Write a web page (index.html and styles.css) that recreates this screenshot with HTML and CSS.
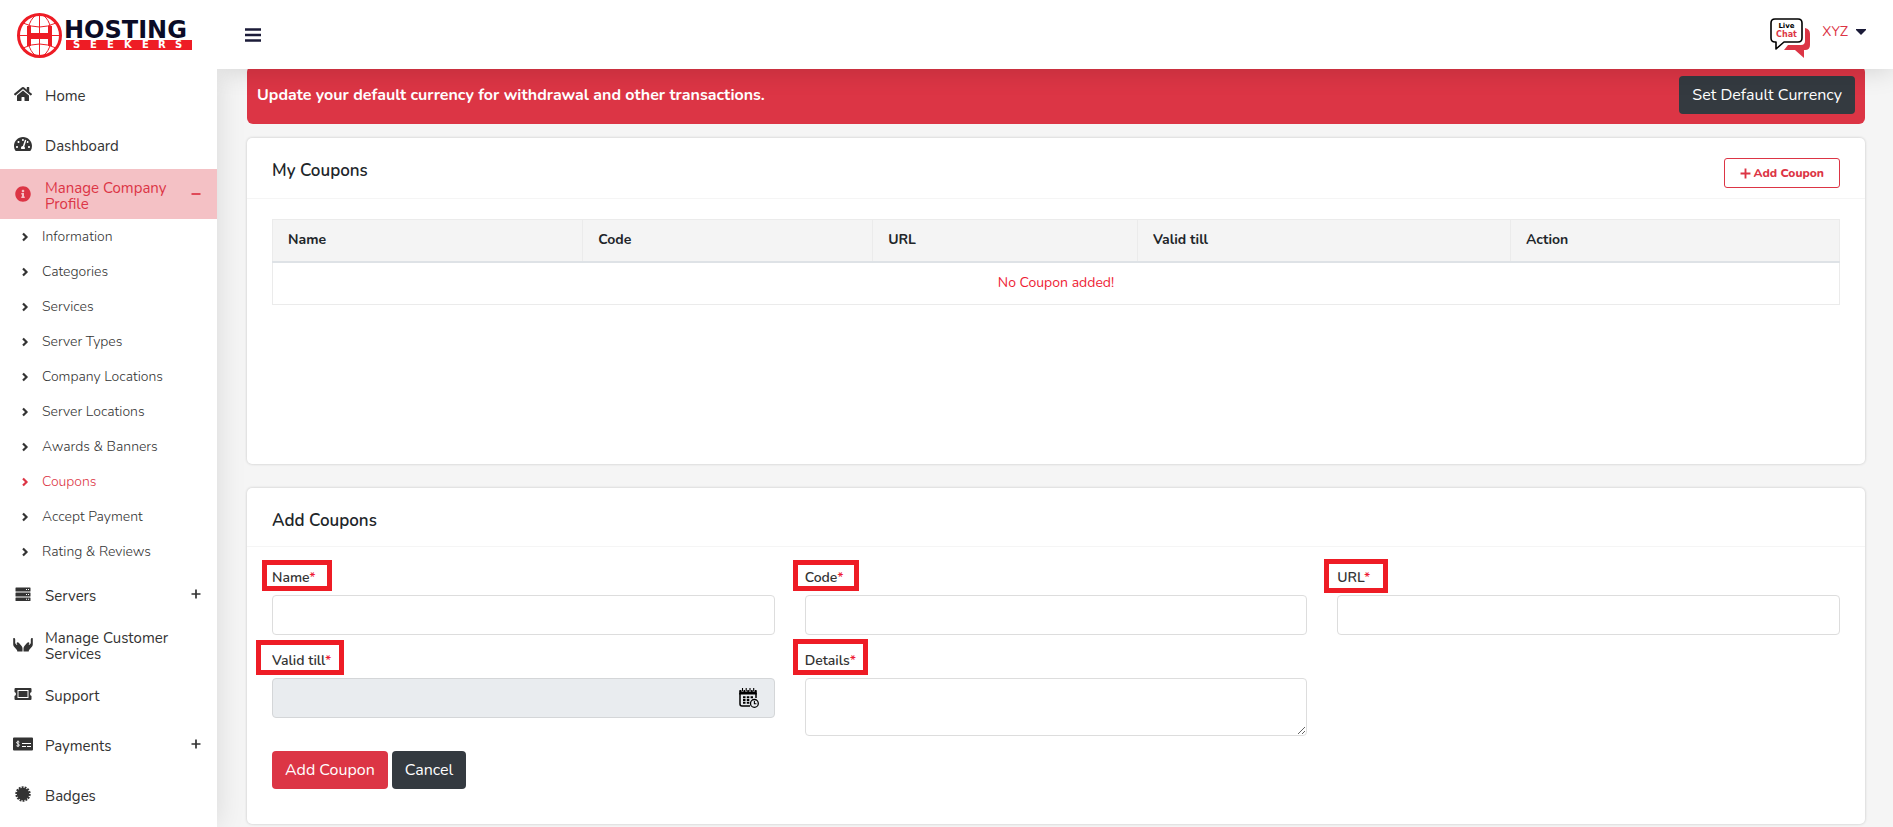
FILE: index.html
```html
<!DOCTYPE html>
<html lang="en">
<head>
<meta charset="utf-8">
<title>Coupons - Hosting Seekers</title>
<meta name="viewport" content="width=device-width, initial-scale=1">
<link rel="stylesheet" href="styles.css">
</head>
<body>
<svg class="defs" aria-hidden="true">
  <symbol id="chevron" viewBox="0 0 8 10"><path d="M2 1.500 5.500 5 2 8.500" fill="none" stroke="currentColor" stroke-width="2.200"/></symbol>
  <symbol id="plus" viewBox="0 0 10 10"><path d="M5 .5v9M.5 5h9" fill="none" stroke="currentColor" stroke-width="1.700"/></symbol>
</svg>
<div class="layout">
  <a class="brand" href="#" aria-label="Hosting Seekers">
    <svg class="logo" width="176" height="46" viewBox="0 0 176 46">
      <g fill="none" stroke="#ee1c25">
        <circle cx="22.500" cy="23.500" r="21" stroke-width="3"/>
        <g stroke-width="1">
          <path d="M22.500 2v43M1 23.500h43M6 11q16.500 8 33 0M6 36q16.500-8 33 0"/>
          <ellipse cx="22.500" cy="23.500" rx="12" ry="21"/>
        </g>
      </g>
      <path fill="#ee1c25" d="M10 14h4v7h17v-7h4v20h-4v-7H14v7h-4z"/>
      <rect x="49" y="28" width="126" height="10" fill="#ee1c25"/>
      <text class="logo-name" x="47" y="26">HOSTING</text>
      <text class="logo-sub" x="56 73 90 107 125 141 158" y="36">SEEKERS</text>
    </svg>
  </a>
  <header class="topbar">
    <button class="menu-toggle" type="button" aria-label="Toggle menu">
      <svg width="16" height="14" viewBox="0 0 16 14"><path d="M0 1.500h16M0 7h16M0 12.500h16" stroke="currentColor" stroke-width="2.400"/></svg>
    </button>
    <div class="account">
      <a class="chat" href="#" aria-label="Live chat">
        <svg width="40" height="41" viewBox="0 0 40 41">
          <path fill="#dc3545" d="M35 10q5 1 5 6v11q0 5-5 5h-1v8l-9-8H14l4-5h13q4 0 4-4z"/>
          <path fill="#fff" stroke="#000" stroke-width="1.600" stroke-linejoin="round" d="M5 1h23q4 0 4 4v15q0 4-4 4H14l-8 7v-7H5q-4 0-4-4V5q0-4 4-4z"/>
          <text class="chat-live" x="16.500" y="10">Live</text>
          <text class="chat-chat" x="16.500" y="18.500">Chat</text>
        </svg>
      </a>
      <button class="user" type="button">XYZ <svg width="10" height="6" viewBox="0 0 10 6"><path d="M0 0h10v1L5 6 0 1z" fill="#1b1b38"/></svg></button>
    </div>
  </header>

  <nav class="sidebar" aria-label="Main">
    <a class="item" href="#">
      <svg class="icon" viewBox="0 0 576 512"><path d="M280.370 148.260L96 300.110V464a16 16 0 0 0 16 16l112.060-.29a16 16 0 0 0 15.920-16V368a16 16 0 0 1 16-16h64a16 16 0 0 1 16 16v95.640a16 16 0 0 0 16 16.050L464 480a16 16 0 0 0 16-16V300L295.670 148.260a12.190 12.190 0 0 0-15.300 0zM571.600 251.470L488 182.560V44.050a12 12 0 0 0-12-12h-56a12 12 0 0 0-12 12v72.610L318.470 43a48 48 0 0 0-61 0L4.340 251.470a12 12 0 0 0-1.600 16.900l25.500 31A12 12 0 0 0 45.150 301l235.220-193.740a12.190 12.190 0 0 1 15.300 0L530.900 301a12 12 0 0 0 16.900-1.600l25.500-31a12 12 0 0 0-1.700-16.930z"/></svg>
      <span class="text">Home</span>
    </a>
    <a class="item" href="#">
      <svg class="icon" viewBox="0 0 576 512"><path d="M288 32C128.940 32 0 160.940 0 320c0 52.800 14.250 102.260 39.060 144.800 5.610 9.620 16.300 15.200 27.440 15.200h443c11.140 0 21.830-5.580 27.440-15.200C561.750 422.260 576 372.800 576 320c0-159.060-128.940-288-288-288zm0 64c14.710 0 26.580 10.130 30.320 23.650-1.110 2.260-2.640 4.230-3.450 6.670l-9.220 27.670c-5.130 3.490-10.970 6.010-17.640 6.010-17.670 0-32-14.330-32-32S270.330 96 288 96zM96 384c-17.670 0-32-14.330-32-32s14.330-32 32-32 32 14.330 32 32-14.330 32-32 32zm48-160c-17.670 0-32-14.330-32-32s14.330-32 32-32 32 14.330 32 32-14.330 32-32 32zm246.770-72.410l-61.330 184C343.130 347.330 352 364.540 352 384c0 11.720-3.380 22.550-8.880 32H232.880c-5.500-9.450-8.880-20.280-8.880-32 0-33.940 26.500-61.430 59.900-63.590l61.340-184.010c4.170-12.560 17.730-19.450 30.360-15.170 12.570 4.190 19.350 17.790 15.170 30.360zm14.660 57.200l15.520-46.550c3.470-1.290 7.130-2.230 11.050-2.230 17.670 0 32 14.330 32 32s-14.330 32-32 32c-11.380-.010-20.890-6.280-26.570-15.220zM480 384c-17.670 0-32-14.330-32-32s14.330-32 32-32 32 14.330 32 32-14.330 32-32 32z"/></svg>
      <span class="text">Dashboard</span>
    </a>
    <a class="item active" href="#">
      <svg class="icon" viewBox="0 0 512 512"><path d="M256 8C119.043 8 8 119.083 8 256c0 136.997 111.043 248 248 248s248-111.003 248-248C504 119.083 392.957 8 256 8zm0 110c23.196 0 42 18.804 42 42s-18.804 42-42 42-42-18.804-42-42 18.804-42 42-42zm56 254c0 6.627-5.373 12-12 12h-88c-6.627 0-12-5.373-12-12v-24c0-6.627 5.373-12 12-12h12v-64h-12c-6.627 0-12-5.373-12-12v-24c0-6.627 5.373-12 12-12h64c6.627 0 12 5.373 12 12v100h12c6.627 0 12 5.373 12 12v24z"/></svg>
      <span class="text">Manage Company Profile</span>
      <svg class="expand" viewBox="0 0 10 10"><path d="M.5 5h9" stroke="currentColor" stroke-width="1.700"/></svg>
    </a>
    <ul class="submenu">
      <li><a class="subitem" href="#"><svg class="chev"><use href="#chevron"/></svg>Information</a></li>
      <li><a class="subitem" href="#"><svg class="chev"><use href="#chevron"/></svg>Categories</a></li>
      <li><a class="subitem" href="#"><svg class="chev"><use href="#chevron"/></svg>Services</a></li>
      <li><a class="subitem" href="#"><svg class="chev"><use href="#chevron"/></svg>Server Types</a></li>
      <li><a class="subitem" href="#"><svg class="chev"><use href="#chevron"/></svg>Company Locations</a></li>
      <li><a class="subitem" href="#"><svg class="chev"><use href="#chevron"/></svg>Server Locations</a></li>
      <li><a class="subitem" href="#"><svg class="chev"><use href="#chevron"/></svg>Awards &amp; Banners</a></li>
      <li><a class="subitem current" href="#"><svg class="chev"><use href="#chevron"/></svg>Coupons</a></li>
      <li><a class="subitem" href="#"><svg class="chev"><use href="#chevron"/></svg>Accept Payment</a></li>
      <li><a class="subitem" href="#"><svg class="chev"><use href="#chevron"/></svg>Rating &amp; Reviews</a></li>
    </ul>
    <a class="item" href="#">
      <svg class="icon" viewBox="0 0 16 16"><path fill-rule="evenodd" d="M1 1.500h14q.5 0 .5.500v3q0 .5-.5.500H1q-.5 0-.5-.5V2q0-.5.500-.5zm10 1.500v1h1V3zm2 0v1h1V3zM1 6.500h14q.5 0 .5.500v3q0 .5-.5.500H1q-.5 0-.5-.5V7q0-.5.500-.5zM11 8v1h1V8zm2 0v1h1V8zM1 11.500h14q.5 0 .5.500v2.500q0 .5-.5.500H1q-.5 0-.5-.5V12q0-.5.500-.5zm10 1.300v1h1v-1zm2 0v1h1v-1z"/></svg>
      <span class="text">Servers</span>
      <svg class="expand"><use href="#plus"/></svg>
    </a>
    <a class="item" href="#">
      <svg class="icon" viewBox="0 0 20 16"><path d="M.2 2.200q2-.5 2 1.300v3.700l1.600 1.900q.6 0 .4-.6L3.600 7.200q.4-1.800 2.200-.5L8.600 10q.9 1 .9 2.500V15.500H4.300q0-1.200-1-2.200L.9 10.500Q.2 9.700.2 8.500zM19.800 2.200q-2-.5-2 1.300v3.700l-1.600 1.900q-.6 0-.4-.6l.6-1.300q-.4-1.800-2.200-.5L11.400 10q-.9 1-.9 2.500V15.500h5.200q0-1.200 1-2.200l2.400-2.800q.7-.8.700-2z"/></svg>
      <span class="text">Manage Customer Services</span>
    </a>
    <a class="item" href="#">
      <svg class="icon" viewBox="0 0 18 16"><path fill-rule="evenodd" d="M1.500 2h15q1 0 1 1v3q-1.500.5-1.500 2t1.500 2v3q0 1-1 1h-15q-1 0-1-1v-3Q2 9.500 2 8T.5 6V3q0-1 1-1zM3.500 4v8h11V4zm1 1h9v6h-9z"/></svg>
      <span class="text">Support</span>
    </a>
    <a class="item" href="#">
      <svg class="icon" viewBox="0 0 20 16"><path fill-rule="evenodd" d="M1 1.500h18q1 0 1 1v11q0 1-1 1H1q-1 0-1-1v-11q0-1 1-1zM9 7v1h9V7zm0 3v1h4v-1zm5 0v1h4v-1z"/><path d="M6.400 6.200Q5 5.200 3.800 6q-.6 1.300 1 1.800 2 .5 1.400 1.900-1 1-2.800 0M5 4.500v6.600" fill="none" stroke="#fff" stroke-width=".9"/></svg>
      <span class="text">Payments</span>
      <svg class="expand"><use href="#plus"/></svg>
    </a>
    <a class="item" href="#">
      <svg class="icon" viewBox="0 0 16 16"><circle cx="8" cy="8" r="6.200"/><circle cx="8" cy="8" r="6.700" fill="none" stroke="currentColor" stroke-width="2" stroke-dasharray="1.900 1.100"/></svg>
      <span class="text">Badges</span>
    </a>
  </nav>

  <main class="content">
    <div class="banner" role="status">
      <strong>Update your default currency for withdrawal and other transactions.</strong>
      <button class="btn btn-dark" type="button">Set Default Currency</button>
    </div>

    <section class="card list-card">
      <div class="card-head">
        <h2>My Coupons</h2>
        <button class="btn-outline" type="button"><svg width="11" height="11"><use href="#plus"/></svg>Add Coupon</button>
      </div>
      <div class="table-wrap">
        <table class="coupons">
          <colgroup><col class="c-name"><col class="c-code"><col class="c-url"><col class="c-valid"><col></colgroup>
          <thead><tr><th>Name</th><th>Code</th><th>URL</th><th>Valid till</th><th>Action</th></tr></thead>
          <tbody><tr><td colspan="5">No Coupon added!</td></tr></tbody>
        </table>
      </div>
    </section>

    <section class="card form-card">
      <div class="card-head"><h2>Add Coupons</h2></div>
      <form class="form">
        <div class="fields">
          <div class="field"><label for="name">Name<span class="req">*</span><i class="mark mark-name"></i></label><input id="name" type="text"></div>
          <div class="field"><label for="code">Code<span class="req">*</span><i class="mark mark-code"></i></label><input id="code" type="text"></div>
          <div class="field"><label for="url">URL<span class="req">*</span><i class="mark mark-url"></i></label><input id="url" type="text"></div>
          <div class="field"><label for="valid">Valid till<span class="req">*</span><i class="mark mark-valid"></i></label>
            <div class="date">
              <input id="valid" type="text" readonly>
              <svg class="cal" width="20" height="20" viewBox="0 0 20 20"><path d="M1 5v11q0 2 2 2h8M17 5v5" fill="none" stroke="#000" stroke-width="1.500"/><path d="M1 2h16q.8 0 .8 1v3.500H.2V3Q.2 2 1 2z"/><path d="M3.500 0v3.500M7.200 0v3.500M11 0v3.500M14.700 0v3.500" stroke="#e9ecef" stroke-width="2.200"/><path d="M3.500 0v3M7.200 0v3M11 0v3M14.700 0v3" stroke="#000" stroke-width="1.100"/><path d="M4 9.200h10M4 12h7M4 14.800h7" stroke="#000" stroke-width="1.900" stroke-dasharray="2.500 1.300"/><circle cx="15.400" cy="15.400" r="3.900" fill="#e9ecef" stroke="#000" stroke-width="1.300"/><path d="M15.400 13v2.700h2" fill="none" stroke="#000" stroke-width="1.100"/></svg>
            </div>
          </div>
          <div class="field"><label for="details">Details<span class="req">*</span><i class="mark mark-details"></i></label><textarea id="details"></textarea></div>
        </div>
        <div class="actions">
          <button class="btn btn-red" type="submit">Add Coupon</button>
          <button class="btn btn-dark" type="button">Cancel</button>
        </div>
      </form>
    </section>
  </main>
</div>
</body>
</html>
```
FILE: styles.css
```css
* { box-sizing: border-box; }
body {
  margin: 0;
  background: #f5f5f5;
  color: #212529;
  font: 14px/18px Nunito, Lato, sans-serif;
}
button, input, textarea { font: inherit; }
a { color: inherit; text-decoration: none; }
.defs { display: none; }

.layout {
  display: grid;
  grid-template-columns: 217px 1fr;
  grid-template-rows: 69px 1fr;
  min-height: 100vh;
}
.brand {
  display: flex;
  align-items: center;
  padding-left: 17px;
  background: #fff;
  position: relative;
  z-index: 3;
}
.logo-name { font: bold 24px "DejaVu Sans", sans-serif; fill: #0b0b26; }
.logo-sub { font: bold 10px "DejaVu Sans", sans-serif; fill: #fff; }

.topbar {
  display: flex;
  align-items: center;
  justify-content: space-between;
  padding: 0 27px 0 28px;
  background: #fff;
  position: relative;
  z-index: 2;
  box-shadow: 0 0 28px rgba(0, 0, 0, .16);
  clip-path: inset(0 0 -40px 0);
}
.menu-toggle, .user {
  display: flex;
  align-items: center;
  padding: 0;
  border: 0;
  background: none;
}
.menu-toggle { color: #1b1b38; }
.account { display: flex; align-items: center; gap: 12px; padding-top: 8px; }
.user { gap: 8px; color: #dc3545; padding-bottom: 14px; }
.chat svg { display: block; }
.chat-live { font: bold 7px "DejaVu Sans", sans-serif; text-anchor: middle; }
.chat-chat { font: bold 8px "DejaVu Sans", sans-serif; fill: #dc3545; text-anchor: middle; }

.sidebar {
  background: #fff;
  position: relative;
  z-index: 1;
  box-shadow: 0 0 28px rgba(0, 0, 0, .12);
  color: #333;
}
.item {
  display: flex;
  align-items: center;
  height: 50px;
  padding: 0 16px 0 13px;
  font-size: 15px;
  line-height: 16px;
}
.item .text { flex: 1; padding: 3px 20px 0 0; }
.active { background: #f4c1c5; color: #dc3545; }
.icon { width: 20px; height: 16px; margin-right: 12px; fill: currentColor; }
.expand { width: 10px; height: 10px; }
.submenu { margin: 0; padding: 0; list-style: none; }
.subitem {
  display: flex;
  align-items: center;
  gap: 13px;
  height: 35px;
  padding-left: 21px;
  font-weight: 300;
}
.chev { width: 8px; height: 10px; }
.current { color: #dc3545; }

.content { padding: 0 28px 0 30px; min-width: 0; }
.banner {
  display: flex;
  align-items: center;
  justify-content: space-between;
  margin: -3px 0 14px;
  padding: 10px;
  border-radius: 6px;
  background: #dc3545;
  color: #fff;
  font-size: 16px;
}
.btn {
  height: 38px;
  padding: 0 13px;
  border: 0;
  border-radius: 4px;
  color: #fff;
  font-size: 16px;
}
.btn-dark { background: #343a40; }
.btn-red { background: #dc3545; }

.card {
  background: #fff;
  border-radius: 5px;
  box-shadow: 0 0 3px rgba(0, 0, 0, .2);
}
.list-card { min-height: 326px; margin-bottom: 24px; }
.form-card { padding-bottom: 35px; }
.card-head {
  display: flex;
  align-items: flex-start;
  justify-content: space-between;
  min-height: 59px;
  padding: 20px 25px 10px;
  border-bottom: 1px solid #f5f5f5;
}
.card-head h2 { margin: 2px 0 0; font-size: 17px; line-height: 22px; font-weight: 600; }
.btn-outline {
  display: flex;
  align-items: center;
  gap: 3px;
  height: 30px;
  padding: 0 15px;
  border: 1px solid #dc3545;
  border-radius: 3px;
  background: #fff;
  color: #dc3545;
  font-size: 12px;
  font-weight: 800;
}
.table-wrap { padding: 20px 25px; }
.coupons {
  width: 100%;
  border-collapse: collapse;
  table-layout: fixed;
  border: 1px solid #ebebeb;
}
.coupons th {
  height: 42px;
  padding: 0 15px;
  border: 1px solid #ebebeb;
  border-bottom: 2px solid #dee2e6;
  background: #f4f4f4;
  text-align: left;
  font-weight: 700;
}
.coupons td { height: 43px; padding: 0; text-align: center; color: #ee1c35; }
.c-name { width: 19.8%; }
.c-code { width: 18.5%; }
.c-url { width: 16.9%; }
.c-valid { width: 23.8%; }

.form { padding: 22px 25px 0; }
.fields { display: grid; grid-template-columns: repeat(3, 1fr); gap: 17px 30px; }
.field { display: flex; flex-direction: column; align-items: flex-start; gap: 8px; }
.field label { position: relative; font-weight: 600; color: #333; }
.req { color: #ee1c35; }
.field input, .field textarea {
  display: block;
  width: 100%;
  height: 40px;
  border: 1px solid #ddd;
  border-radius: 4px;
  background: #fff;
}
.field textarea { height: 58px; }
.date { position: relative; width: 100%; }
.field .date input { background: #e9ecef; border-color: #d4d6d8; }
.cal { position: absolute; right: 16px; top: 10px; }
/* Highlight frames drawn round the required field labels */
.mark { position: absolute; border: 5px solid #ee1c25; left: -12px; pointer-events: none; }
.mark-name { top: -9px; left: -10px; width: 70px; height: 31px; }
.mark-code { top: -9px; width: 66px; height: 31px; }
.mark-url { top: -10px; left: -13px; width: 64px; height: 34px; }
.mark-valid { top: -12px; left: -16px; width: 88px; height: 35px; }
.mark-details { top: -13px; width: 75px; height: 36px; }
.actions { display: flex; gap: 4px; padding-top: 15px; }
```
